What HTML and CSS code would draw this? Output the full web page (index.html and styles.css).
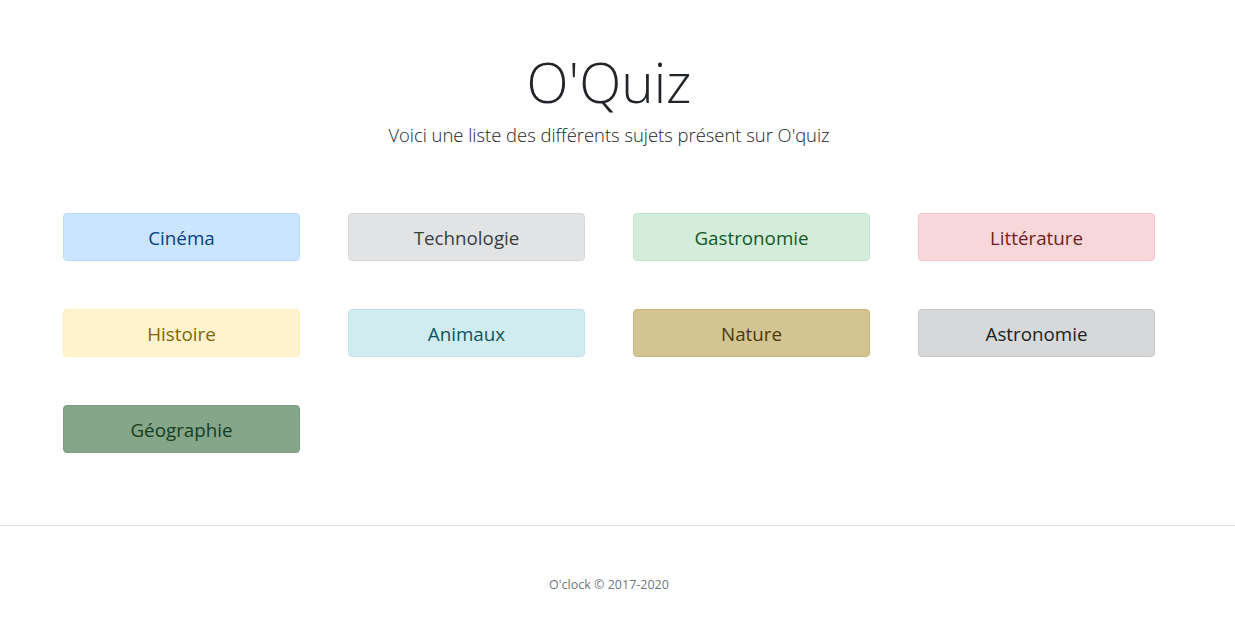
FILE: index.html
```html
<!DOCTYPE html>
<html lang="fr">
<head>
<meta charset="utf-8">
<title>O'Quiz</title>
<link rel="stylesheet" href="styles.css">
</head>
<body>
<main class="page">
  <header class="intro">
    <h1 class="title">O'Quiz</h1>
    <p class="lead">Voici une liste des différents sujets présent sur O'quiz</p>
  </header>
  <section class="grid">
    <a class="tag tag-primary">Cinéma</a>
    <a class="tag tag-secondary">Technologie</a>
    <a class="tag tag-success">Gastronomie</a>
    <a class="tag tag-danger">Littérature</a>
    <a class="tag tag-warning">Histoire</a>
    <a class="tag tag-info">Animaux</a>
    <a class="tag tag-nature">Nature</a>
    <a class="tag tag-dark">Astronomie</a>
    <a class="tag tag-geo">Géographie</a>
  </section>
</main>
<footer class="footer">
  <p class="copy">O'clock © 2017-2020</p>
</footer>
</body>
</html>
```

FILE: styles.css
```css
* { box-sizing: border-box; }
html, body { margin: 0; padding: 0; background: #fff; }
body {
  font-family: "Open Sans", "Noto Sans", sans-serif;
  color: #212529;
}
.page {
  width: 1092px;
  margin: 0 0 0 63px;
  padding-top: 48px;
}
.intro { text-align: center; }
.title {
  margin: 0;
  font-size: 55px;
  font-weight: 300;
  line-height: 67px;
  color: #212529;
}
.lead {
  margin: 7px 0 0;
  font-size: 18.4px;
  font-weight: 300;
  color: #212529;
}
.grid {
  display: grid;
  grid-template-columns: repeat(4, 237px);
  column-gap: 48px;
  row-gap: 48px;
  margin-top: 66px;
  padding-bottom: 72px;
}
.tag {
  display: flex;
  align-items: center;
  justify-content: center;
  height: 48px;
  padding-top: 2px;
  border: 1px solid transparent;
  border-radius: 4px;
  font-size: 18.8px;
  text-decoration: none;
}
.tag-primary { background: #cce5ff; border-color: #b8daff; color: #004085; }
.tag-secondary { background: #e2e3e5; border-color: #d6d8db; color: #383d41; }
.tag-success { background: #d4edda; border-color: #c3e6cb; color: #155724; }
.tag-danger { background: #f8d7da; border-color: #f5c6cb; color: #721c24; }
.tag-warning { background: #fff3cd; border-color: #ffeeba; color: #856404; }
.tag-info { background: #d1ecf1; border-color: #bee5eb; color: #0c5460; }
.tag-nature { background: #d3c591; border-color: #c8b57a; color: #4a3a08; }
.tag-dark { background: #d6d8d9; border-color: #c6c8ca; color: #1b1e21; }
.tag-geo { background: #86a68a; border-color: #7a9b7e; color: #173d1e; }
.footer {
  border-top: 1px solid #e0e0e0;
  padding-top: 50px;
}
.copy {
  width: 1218px;
  margin: 0;
  text-align: center;
  font-size: 12.5px;
  color: #6c757d;
}
```
